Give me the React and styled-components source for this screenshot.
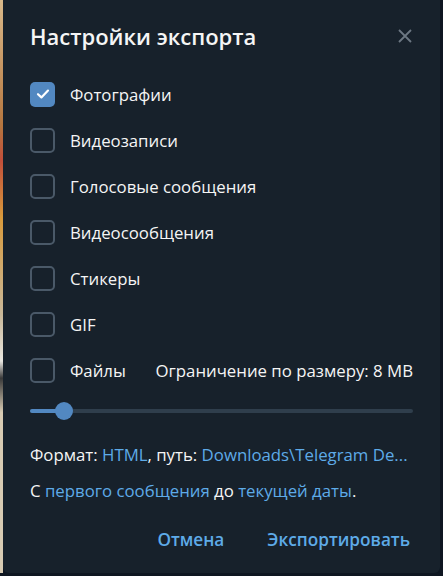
import styled, { createGlobalStyle } from "styled-components";

const GlobalStyle = createGlobalStyle`
  html, body {
    margin: 0;
    padding: 0;
    background: #0e1621;
    font-family: "Open Sans", "Noto Sans", sans-serif;
  }
`;

const Screen = styled.div`
  width: 443px;
  height: 576px;
  display: flex;
  overflow: hidden;
`;

const Backdrop = styled.div`
  width: 3px;
  height: 573px;
  background: linear-gradient(
    180deg,
    #d9b98a 0%,
    #b5763f 22%,
    #c24f3a 28%,
    #d89a3c 38%,
    #c9b89a 55%,
    #e8e6e0 63%,
    #3a3a3a 66%,
    #d8cbb3 72%,
    #d8cbb3 100%
  );
`;

const Dialog = styled.div`
  width: 437px;
  height: 573px;
  background: #17212b;
  border-radius: 0 0 6px 6px;
  box-sizing: border-box;
  padding: 0 27px;
  display: flex;
  flex-direction: column;
  color: #f5f5f5;
`;

const Header = styled.div`
  display: flex;
  align-items: center;
  justify-content: space-between;
  height: 71px;
`;

const Title = styled.h1`
  margin: 0;
  font-size: 22px;
  font-weight: 600;
`;

const Close = styled.button`
  border: none;
  background: none;
  padding: 0;
  width: 16px;
  height: 16px;
  display: flex;
  cursor: pointer;
`;

const List = styled.div`
  display: flex;
  flex-direction: column;
`;

const Row = styled.label`
  display: flex;
  align-items: center;
  height: 46px;
  font-size: 16.8px;
`;

const Box = styled.span`
  width: 25px;
  height: 25px;
  box-sizing: border-box;
  border-radius: 5px;
  margin-right: 15px;
  display: flex;
  align-items: center;
  justify-content: center;
  flex-shrink: 0;
  background: ${(p) => (p.$checked ? "#5288c1" : "transparent")};
  border: ${(p) => (p.$checked ? "none" : "2px solid #4a5968")};
`;

const Limit = styled.span`
  margin-left: auto;
`;

const Slider = styled.div`
  position: relative;
  height: 4px;
  margin: 16px 0 0 0;
  border-radius: 2px;
  background: #2f3e4c;
`;

const SliderFill = styled.div`
  height: 100%;
  border-radius: 2px;
  background: #5288c1;
`;

const Thumb = styled.div`
  position: absolute;
  top: 50%;
  width: 18px;
  height: 18px;
  border-radius: 50%;
  background: #5288c1;
  transform: translate(-50%, -50%);
`;

const Info = styled.p`
  margin: ${(p) => p.$top}px 0 0 0;
  font-size: 16.8px;
  line-height: 20px;
  white-space: nowrap;
`;

const Link = styled.span`
  color: #5eabe8;
`;

const Footer = styled.div`
  display: flex;
  justify-content: flex-end;
  gap: 43px;
  margin-top: 29px;
  margin-right: 3px;
`;

const Button = styled.button`
  border: none;
  background: none;
  padding: 0;
  color: #5eabe8;
  font-family: "Open Sans", "Noto Sans", sans-serif;
  font-size: 17.2px;
  line-height: 20px;
  font-weight: 600;
  cursor: pointer;
`;

const items = [
  { label: "Фотографии", checked: true },
  { label: "Видеозаписи" },
  { label: "Голосовые сообщения" },
  { label: "Видеосообщения" },
  { label: "Стикеры" },
  { label: "GIF" },
  { label: "Файлы", limit: "Ограничение по размеру: 8 MB" },
];

export default function App() {
  const value = 9;
  return (
    <>
      <GlobalStyle />
      <Screen>
        <Backdrop />
        <Dialog>
          <Header>
            <Title>Настройки экспорта</Title>
            <Close>
              <svg width="16" height="16" viewBox="0 0 16 16">
                <path d="M2 2 L14 14 M14 2 L2 14" stroke="#6d7883" strokeWidth="1.8" />
              </svg>
            </Close>
          </Header>
          <List>
            {items.map((it) => (
              <Row key={it.label}>
                <Box $checked={it.checked}>
                  {it.checked && (
                    <svg width="14" height="12" viewBox="0 0 14 12">
                      <path d="M2 6.2 L5.4 9.4 L12 2.6" fill="none" stroke="#fff" strokeWidth="2.2" strokeLinecap="round" strokeLinejoin="round" />
                    </svg>
                  )}
                </Box>
                {it.label}
                {it.limit && <Limit>{it.limit}</Limit>}
              </Row>
            ))}
          </List>
          <Slider>
            <SliderFill style={{ width: `${value}%` }} />
            <Thumb style={{ left: `${value}%` }} />
          </Slider>
          <Info $top={32}>
            Формат: <Link>HTML</Link>, путь: <Link>Downloads\Telegram De...</Link>
          </Info>
          <Info $top={16}>
            С <Link>первого сообщения</Link> до <Link>текущей даты</Link>.
          </Info>
          <Footer>
            <Button>Отмена</Button>
            <Button>Экспортировать</Button>
          </Footer>
        </Dialog>
      </Screen>
    </>
  );
}
